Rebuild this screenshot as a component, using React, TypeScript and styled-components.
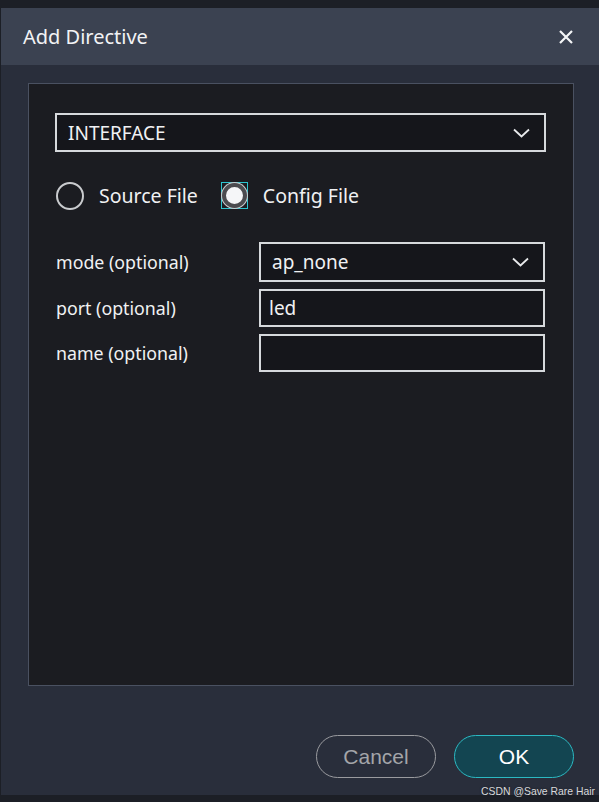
import React from 'react'
import styled, { createGlobalStyle } from 'styled-components'

const GlobalStyle = createGlobalStyle`
  html, body {
    margin: 0;
    padding: 0;
    background: #1c1f26;
  }
  body {
    font-family: "Noto Sans", "Open Sans", sans-serif;
  }
`

const Chevron = () => (
  <svg width="17" height="10" viewBox="0 0 17 10" fill="none">
    <path d="M1 1.5 L8.5 8.5 L16 1.5" stroke="#e8eaec" strokeWidth="1.8" />
  </svg>
)

const CloseIcon = () => (
  <svg width="16" height="16" viewBox="0 0 16 16" fill="none">
    <path d="M2 2 L14 14 M14 2 L2 14" stroke="#f4f5f7" strokeWidth="2.2" />
  </svg>
)

const fields = [
  { label: 'mode (optional)', value: 'ap_none', select: true },
  { label: 'port (optional)', value: 'led', select: false },
  { label: 'name (optional)', value: '', select: false },
]

const App = () => {
  return (
    <Page>
      <GlobalStyle />
      <Dialog>
        <Header>
          <Title>Add Directive</Title>
          <CloseIcon />
        </Header>
        <Body>
          <Panel>
            <Select>
              <span>INTERFACE</span>
              <Chevron />
            </Select>
            <RadioRow>
              <RadioItem>
                <Radio />
                <RadioLabel>Source File</RadioLabel>
              </RadioItem>
              <RadioItem>
                <Focus>
                  <Radio checked />
                </Focus>
                <RadioLabel>Config File</RadioLabel>
              </RadioItem>
            </RadioRow>
            <Form>
              {fields.map((f) => (
                <FieldRow key={f.label}>
                  <Label>{f.label}</Label>
                  <Input select={f.select}>
                    <span>{f.value}</span>
                    {f.select && <Chevron />}
                  </Input>
                </FieldRow>
              ))}
            </Form>
          </Panel>
          <Footer>
            <Button>Cancel</Button>
            <Button primary>OK</Button>
          </Footer>
        </Body>
      </Dialog>
      <Watermark>CSDN @Save Rare Hair</Watermark>
    </Page>
  )
}

export default App

const Page = styled.div`
  position: relative;
  width: 599px;
  height: 802px;
  padding-top: 8px;
  padding-left: 1px;
  box-sizing: border-box;
  background: #1c1f26;
  overflow: hidden;
`

const Dialog = styled.div`
  width: 598px;
  height: 787px;
  background: #292e3b;
  display: flex;
  flex-direction: column;
`

const Header = styled.div`
  height: 57px;
  background: #3b4251;
  display: flex;
  align-items: center;
  justify-content: space-between;
  padding: 0 25px 0 22px;
  box-sizing: border-box;
`

const Title = styled.div`
  color: #f2f3f5;
  font-size: 20px;
  margin-top: -1px;
`

const Body = styled.div`
  flex: 1;
  display: flex;
  flex-direction: column;
  padding: 18px 25px 17px 27px;
  box-sizing: border-box;
`

const Panel = styled.div`
  height: 603px;
  background: #1b1c21;
  border: 1px solid #4a5161;
  box-sizing: border-box;
  padding: 29px 27px 0 26px;
  display: flex;
  flex-direction: column;
`

const Select = styled.div`
  height: 39px;
  border: 2px solid #d6d9dc;
  background: #15161b;
  box-sizing: border-box;
  display: flex;
  align-items: center;
  justify-content: space-between;
  padding: 0 14px 0 11px;
  color: #f0f1f3;
  font-size: 19px;
`

const RadioRow = styled.div`
  display: flex;
  align-items: center;
  gap: 23px;
  margin-top: 29px;
  height: 29px;
  padding-left: 1px;
`

const RadioItem = styled.div`
  display: flex;
  align-items: center;
  gap: 15px;
`

const Focus = styled.div`
  width: 27px;
  height: 27px;
  border: 1px solid #2ec4cf;
  box-sizing: border-box;
  display: flex;
  align-items: center;
  justify-content: center;
`

const Radio = styled.span<{ checked?: boolean }>`
  display: block;
  box-sizing: border-box;
  border-radius: 50%;
  width: ${(p) => (p.checked ? '25px' : '28px')};
  height: ${(p) => (p.checked ? '25px' : '28px')};
  border: ${(p) => (p.checked ? '4px solid #4b4b4f' : '2px solid #c9cbce')};
  background: ${(p) => (p.checked ? '#f5f6f8' : 'transparent')};
  box-shadow: ${(p) => (p.checked ? '0 0 0 1px #c9cbce' : 'none')};
`

const RadioLabel = styled.span`
  color: #f0f1f3;
  font-size: 19.5px;
`

const Form = styled.div`
  display: flex;
  flex-direction: column;
  gap: 7px;
  margin-top: 32px;
`

const FieldRow = styled.div`
  display: flex;
  align-items: center;
`

const Label = styled.div`
  width: 204px;
  padding-left: 1px;
  box-sizing: border-box;
  color: #f0f1f3;
  font-size: 17.8px;
`

const Input = styled.div<{ select?: boolean }>`
  width: 286px;
  height: ${(p) => (p.select ? '40px' : '38px')};
  border: 2px solid #d6d9dc;
  background: #15161b;
  box-sizing: border-box;
  display: flex;
  align-items: center;
  justify-content: space-between;
  padding: ${(p) => (p.select ? '0 14px 0 11px' : '0 10px 0 8px')};
  color: #f0f1f3;
  font-size: 19px;
`

const Footer = styled.div`
  flex: 1;
  display: flex;
  align-items: flex-end;
  justify-content: flex-end;
  gap: 18px;
`

const Button = styled.button<{ primary?: boolean }>`
  width: 120px;
  height: 43px;
  border-radius: 22px;
  border: 1px solid ${(p) => (p.primary ? '#2bb9c2' : '#9a9b9f')};
  background: ${(p) => (p.primary ? '#134551' : 'transparent')};
  color: ${(p) => (p.primary ? '#ffffff' : '#a3a5a9')};
  font-family: "Liberation Sans", Arial, sans-serif;
  font-size: 21px;
  padding: 0;
  cursor: pointer;
`

const Watermark = styled.div`
  position: absolute;
  right: 4px;
  bottom: 5px;
  color: #d8d9db;
  font-family: "Liberation Sans", Arial, sans-serif;
  font-size: 10.4px;
  text-shadow: 0 0 2px #1c1f26;
`
